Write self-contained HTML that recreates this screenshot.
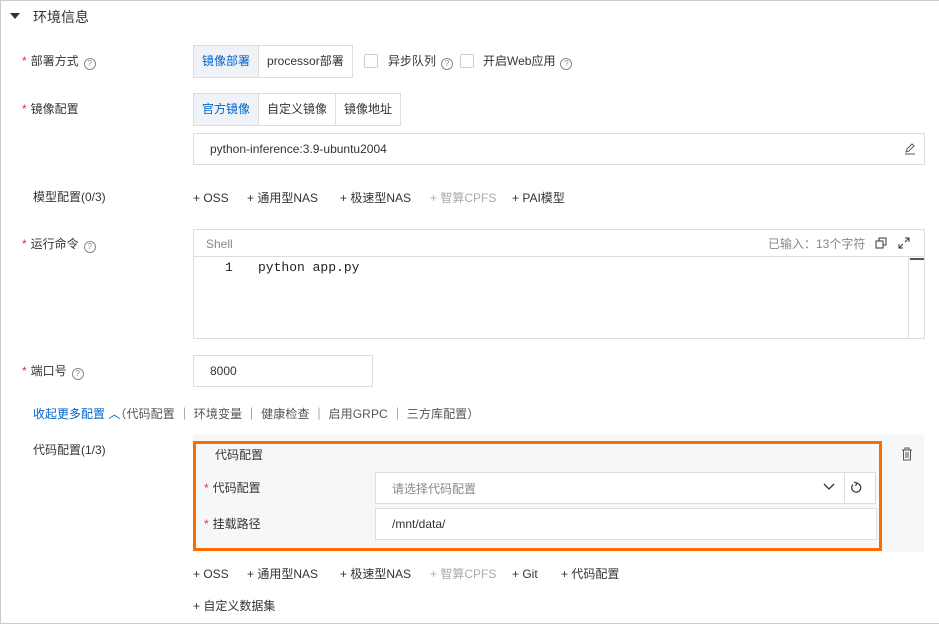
<!DOCTYPE html>
<html><head><meta charset="utf-8"><style>
*{box-sizing:border-box;margin:0;padding:0}
body{width:939px;height:625px;background:#fff;font-family:"Liberation Sans","Noto Sans CJK SC",sans-serif;font-size:12px;color:#333;position:relative;overflow:hidden}
.frame{position:absolute;left:0;top:0;width:939px;height:624px;border:1px solid #ccc;border-right:none}
.a{position:absolute;white-space:nowrap;line-height:17px}
.star{color:#e0343a;margin-right:4px}
.q{display:inline-block;width:12px;height:12px;border:1px solid #888;border-radius:50%;font-size:8px;line-height:10px;text-align:center;color:#888;margin-left:5px;vertical-align:-1px}
.box{position:absolute;border:1px solid #ddd;background:#fff}
.seg{position:absolute;display:flex;border:1px solid #ddd;height:33px}
.seg div{padding:0 8px;line-height:31px;border-left:1px solid #ddd;background:#fff;color:#333}
.seg div:first-child{border-left:none}
.seg .on{background:#eff3f8;color:#0064c8}
.cb{position:absolute;width:14px;height:14px;border:1px solid #ccc;border-radius:2px;background:#fff}
.dis{color:#aaa}
</style></head><body>
<div class="frame"></div>
<div class="a" style="left:10px;top:13px;width:0;height:0;border-left:5px solid transparent;border-right:5px solid transparent;border-top:6px solid #333"></div>
<div class="a" style="left:33px;top:9px;font-size:14px;color:#333">环境信息</div>

<div class="a" style="left:22px;top:53px"><span class="star">*</span>部署方式<span class="q">?</span></div>
<div class="seg" style="left:193px;top:45px"><div class="on">镜像部署</div><div>processor部署</div></div>
<div class="cb" style="left:364px;top:54px"></div>
<div class="a" style="left:388px;top:53px">异步队列<span class="q">?</span></div>
<div class="cb" style="left:460px;top:54px"></div>
<div class="a" style="left:483px;top:53px">开启Web应用<span class="q">?</span></div>

<div class="a" style="left:22px;top:101px"><span class="star">*</span>镜像配置</div>
<div class="seg" style="left:193px;top:93px"><div class="on">官方镜像</div><div>自定义镜像</div><div>镜像地址</div></div>
<div class="box" style="left:193px;top:133px;width:732px;height:32px"></div>
<div class="a" style="left:210px;top:141px">python-inference:3.9-ubuntu2004</div>
<svg class="a" style="left:904px;top:143px" width="12" height="12" viewBox="0 0 12 12"><path d="M2 9l1-3 5-5 2 2-5 5-3 1zM1 11h10" stroke="#555" fill="none"/></svg>

<div class="a" style="left:33px;top:189px">模型配置(0/3)</div>
<div class="a" style="left:193px;top:190px">+ OSS</div>
<div class="a" style="left:247px;top:190px">+ 通用型NAS</div>
<div class="a" style="left:340px;top:190px">+ 极速型NAS</div>
<div class="a dis" style="left:430px;top:190px">+ 智算CPFS</div>
<div class="a" style="left:512px;top:190px">+ PAI模型</div>

<div class="a" style="left:22px;top:236px"><span class="star">*</span>运行命令<span class="q">?</span></div>
<div class="box" style="left:193px;top:229px;width:732px;height:110px"></div>
<div class="a" style="left:194px;top:256px;width:730px;height:1px;background:#ddd"></div>
<div class="a" style="left:908px;top:257px;width:1px;height:81px;background:#ddd"></div>
<div class="a" style="left:910px;top:258px;width:14px;height:2px;background:#555"></div>
<div class="a" style="left:206px;top:236px;color:#888">Shell</div>
<div class="a" style="left:768px;top:236px;color:#888">已输入：13个字符</div>
<svg class="a" style="left:875px;top:237px" width="12" height="12" viewBox="0 0 12 12"><rect x="1" y="4" width="7" height="7" fill="none" stroke="#333"/><path d="M4 4V1h7v7H8" fill="none" stroke="#333"/></svg>
<svg class="a" style="left:898px;top:237px" width="12" height="12" viewBox="0 0 12 12"><path d="M7 1h4v4M11 1L7 5M5 11H1V7M1 11l4-4" fill="none" stroke="#333"/></svg>
<div class="a" style="left:225px;top:259px;font-family:'Liberation Mono','DejaVu Sans Mono',monospace;font-size:13px;color:#222">1</div>
<div class="a" style="left:258px;top:259px;font-family:'Liberation Mono','DejaVu Sans Mono',monospace;font-size:13px;color:#222">python app.py</div>

<div class="a" style="left:22px;top:363px"><span class="star">*</span>端口号<span class="q">?</span></div>
<div class="box" style="left:193px;top:355px;width:180px;height:32px"></div>
<div class="a" style="left:210px;top:363px">8000</div>

<div class="a" style="left:33px;top:406px"><span style="color:#0064c8">收起更多配置 ︿</span><span style="color:#555;letter-spacing:0.1px">（代码配置 ｜ 环境变量 ｜ 健康检查 ｜ 启用GRPC ｜ 三方库配置）</span></div>

<div class="a" style="left:33px;top:442px">代码配置(1/3)</div>
<div class="a" style="left:193px;top:434px;width:731px;height:118px;background:#f6f7f9"></div>
<div class="a" style="left:193px;top:441px;width:689px;height:110px;border:3px solid #ff6a00"></div>
<div class="a" style="left:215px;top:447px">代码配置</div>
<svg class="a" style="left:901px;top:447px" width="12" height="14" viewBox="0 0 12 14"><path d="M1 3h10M4 3V1h4v2M2.5 3v10h7V3M5 5v6M7 5v6" fill="none" stroke="#555"/></svg>
<div class="a" style="left:204px;top:480px"><span class="star">*</span>代码配置</div>
<div class="box" style="left:375px;top:472px;width:501px;height:32px"></div>
<div class="a" style="left:844px;top:473px;width:1px;height:30px;background:#ddd"></div>
<div class="a" style="left:392px;top:481px;color:#888">请选择代码配置</div>
<svg class="a" style="left:823px;top:482px" width="12" height="10" viewBox="0 0 12 10"><path d="M1 2l5 5 5-5" fill="none" stroke="#333" stroke-width="1.3"/></svg>
<svg class="a" style="left:850px;top:481px" width="12" height="13" viewBox="0 0 12 13"><path d="M7 2.2A4.5 4.5 0 1 1 3 3.5" fill="none" stroke="#333" stroke-width="1.2"/><path d="M4 1l3 1.2-1.5 2.5" fill="none" stroke="#333" stroke-width="1.2"/></svg>
<div class="a" style="left:204px;top:516px"><span class="star">*</span>挂载路径</div>
<div class="box" style="left:375px;top:508px;width:502px;height:32px"></div>
<div class="a" style="left:392px;top:516px">/mnt/data/</div>

<div class="a" style="left:193px;top:566px">+ OSS</div>
<div class="a" style="left:247px;top:566px">+ 通用型NAS</div>
<div class="a" style="left:340px;top:566px">+ 极速型NAS</div>
<div class="a dis" style="left:430px;top:566px">+ 智算CPFS</div>
<div class="a" style="left:512px;top:566px">+ Git</div>
<div class="a" style="left:561px;top:566px">+ 代码配置</div>
<div class="a" style="left:193px;top:598px">+ 自定义数据集</div>
</body></html>
